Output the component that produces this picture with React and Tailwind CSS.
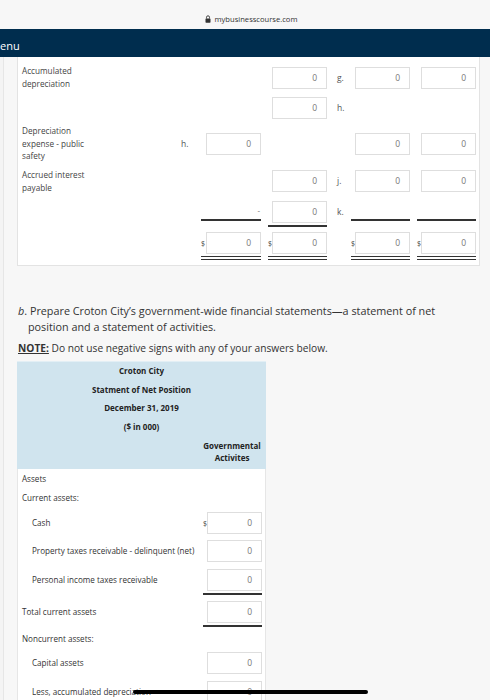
import React from "react";

// one answer box, with optional $ sign to its left
function Cell({ w = "w-[59px]", dollar, under, dbl, empty, mark }) {
    let line = "";
    if (under) line = "border-b-2 border-[#333] pb-[2px]";
    if (dbl) line = "border-b-[4px] border-double border-[#333] pb-[2px]";

    if (empty) {
        return (
            <div
                className={`${w} h-[20px] flex items-center justify-end pr-[1px] text-[8px] text-[#666] ${
                    under ? "border-b-2 border-[#333]" : ""
                }`}
            >
                {mark}
            </div>
        );
    }

    return (
        <div className={`${w} flex items-center ${line}`}>
            <span className="flex-1 text-[7px] text-[#444] leading-none">
                {dollar ? "$" : ""}
            </span>
            <div className="w-[55px] h-[22px] border border-[#dedede] bg-white flex items-center justify-end pr-[9px] text-[8.5px] text-[#777]">
                0
            </div>
        </div>
    );
}

function Blank({ w = "w-[59px]" }) {
    return <div className={w} />;
}

function Letter({ w = "w-[24px]", pl = "pl-[10px]", children }) {
    return (
        <div className={`${w} ${pl} h-[22px] flex items-center text-[8.5px] text-[#555]`}>
            {children}
        </div>
    );
}

function Gap() {
    return <div className="w-[7px]" />;
}

function BodyRow({ label, indent, h, pt, dollar, under }) {
    return (
        <div className={`flex items-start ${h} ${pt}`}>
            <div
                className={`w-[181px] h-[22px] flex items-center text-[8.1px] text-[#333] ${
                    indent ? "pl-[10px]" : ""
                }`}
            >
                {label}
            </div>
            <Cell dollar={dollar} under={under} />
        </div>
    );
}

export default function App() {
    return (
        <div className="relative h-[700px] w-[490px] overflow-hidden bg-[#f4f4f4] font-['Open_Sans',sans-serif]">
            {/* browser url bar */}
            <div className="h-[29px] bg-[#f7f7f7] flex items-end justify-center pb-[5px] pl-[12px]">
                <svg width="6" height="8" viewBox="0 0 6 8" className="mr-[4px] mb-[1px]">
                    <path d="M1.5 3.5V2.3a1.5 1.5 0 0 1 3 0v1.2" fill="none" stroke="#333" strokeWidth="0.9" />
                    <rect x="0.5" y="3.5" width="5" height="4.2" rx="0.6" fill="#333" />
                </svg>
                <span className="text-[7.6px] text-[#333] leading-none">mybusinesscourse.com</span>
            </div>

            {/* site nav bar */}
            <div className="h-[28px] bg-[#002d4e] flex items-center pt-[6px]">
                <span className="text-[11px] text-white">enu</span>
            </div>

            <div className="ml-[3px] border-l border-[#e6e6e6] bg-[#f7f7f7] h-full pl-[13px]">
                {/* top panel */}
                <div className="w-[463px] bg-white border-x border-b border-[#e3e3e3] pl-[4px] pt-[6px] pb-[7px] text-[8.2px] text-[#444] leading-[12.5px]">
                    <div className="flex h-[30px]">
                        <div className="w-[159px] mt-[2px]">
                            Accumulated
                            <br />
                            depreciation
                        </div>
                        <div className="flex items-start mt-[4px]">
                            <Letter w="w-[20px]" pl="pl-0" />
                            <Blank w="w-[60px]" />
                            <Gap />
                            <Cell />
                            <Letter>g.</Letter>
                            <Cell />
                            <Gap />
                            <Cell />
                        </div>
                    </div>

                    <div className="flex h-[29px]">
                        <div className="w-[159px]" />
                        <div className="flex items-start mt-[4px]">
                            <Letter w="w-[20px]" pl="pl-0" />
                            <Blank w="w-[60px]" />
                            <Gap />
                            <Cell />
                            <Letter>h.</Letter>
                        </div>
                    </div>

                    <div className="flex h-[43px]">
                        <div className="w-[159px] mt-[3px]">
                            Depreciation
                            <br />
                            expense - public
                            <br />
                            safety
                        </div>
                        <div className="flex items-start mt-[11px]">
                            <Letter w="w-[20px]" pl="pl-0">
                                h.
                            </Letter>
                            <Cell w="w-[60px]" />
                            <Gap />
                            <Blank />
                            <Letter />
                            <Cell />
                            <Gap />
                            <Cell />
                        </div>
                    </div>

                    <div className="flex h-[31px]">
                        <div className="w-[159px] mt-[4px]">
                            Accrued interest
                            <br />
                            payable
                        </div>
                        <div className="flex items-start mt-[5px]">
                            <Letter w="w-[20px]" pl="pl-0" />
                            <Blank w="w-[60px]" />
                            <Gap />
                            <Cell />
                            <Letter>j.</Letter>
                            <Cell />
                            <Gap />
                            <Cell />
                        </div>
                    </div>

                    <div className="flex h-[31px]">
                        <div className="w-[159px]" />
                        <div className="flex items-start mt-[5px]">
                            <Letter w="w-[20px]" pl="pl-0" />
                            <Cell w="w-[60px]" empty under mark="-" />
                            <Gap />
                            <Cell under />
                            <Letter>k.</Letter>
                            <Cell empty under />
                            <Gap />
                            <Cell empty under />
                        </div>
                    </div>

                    <div className="flex h-[31px]">
                        <div className="w-[159px]" />
                        <div className="flex items-start mt-[5px]">
                            <Letter w="w-[20px]" pl="pl-0" />
                            <Cell w="w-[60px]" dollar dbl />
                            <Gap />
                            <Cell dollar dbl />
                            <Letter />
                            <Cell dollar dbl />
                            <Gap />
                            <Cell dollar dbl />
                        </div>
                    </div>
                </div>

                {/* part b */}
                <div className="w-[440px] mt-[37px] pl-[11px] -indent-[10px] text-[10.8px] leading-[16px] text-[#333]">
                    <i>b</i>. Prepare Croton City’s government-wide financial statements—a statement of net
                    position and a statement of activities.
                </div>
                <div className="mt-[6px] ml-[1px] text-[10.2px] leading-[14px] text-[#333]">
                    <span className="font-bold underline">NOTE:</span> Do not use negative signs with any of your
                    answers below.
                </div>

                {/* statement table */}
                <div className="mt-[6px] w-[249px]">
                    <div className="h-[108px] bg-[#d0e4ee] border-t border-[#e3eff5] text-[8px] font-bold text-[#222]">
                        <div className="text-center leading-[18.5px]">
                            <div>Croton City</div>
                            <div>Statment of Net Position</div>
                            <div>December 31, 2019</div>
                            <div>($ in 000)</div>
                        </div>
                        <div className="flex justify-end mt-[4px] pr-[2px]">
                            <div className="w-[64px] text-center leading-[12px]">
                                Governmental
                                <br />
                                Activites
                            </div>
                        </div>
                    </div>

                    <div className="bg-white border-x border-[#e6e6e6] pl-[4px] h-[260px]">
                        <div className="h-[20px] flex items-center text-[8.1px] text-[#333]">Assets</div>
                        <div className="h-[18px] flex items-center text-[8.1px] text-[#333]">Current assets:</div>
                        <BodyRow label="Cash" indent h="h-[31px]" pt="pt-[5px]" dollar />
                        <BodyRow
                            label="Property taxes receivable - delinquent (net)"
                            indent
                            h="h-[28px]"
                            pt="pt-[2px]"
                        />
                        <BodyRow label="Personal income taxes receivable" indent h="h-[30px]" pt="pt-[3px]" under />
                        <BodyRow label="Total current assets" h="h-[33px]" pt="pt-[5px]" under />
                        <div className="h-[20px] flex items-center text-[8.1px] text-[#333]">Noncurrent assets:</div>
                        <BodyRow label="Capital assets" indent h="h-[29px]" pt="pt-[3px]" />
                        <BodyRow label="Less, accumulated depreciation" indent h="h-[29px]" pt="pt-[3px]" />
                    </div>
                </div>
            </div>

            {/* home indicator over the page */}
            <div className="absolute left-[133px] top-[690px] w-[235px] h-[4px] rounded-full bg-black" />
        </div>
    );
}
